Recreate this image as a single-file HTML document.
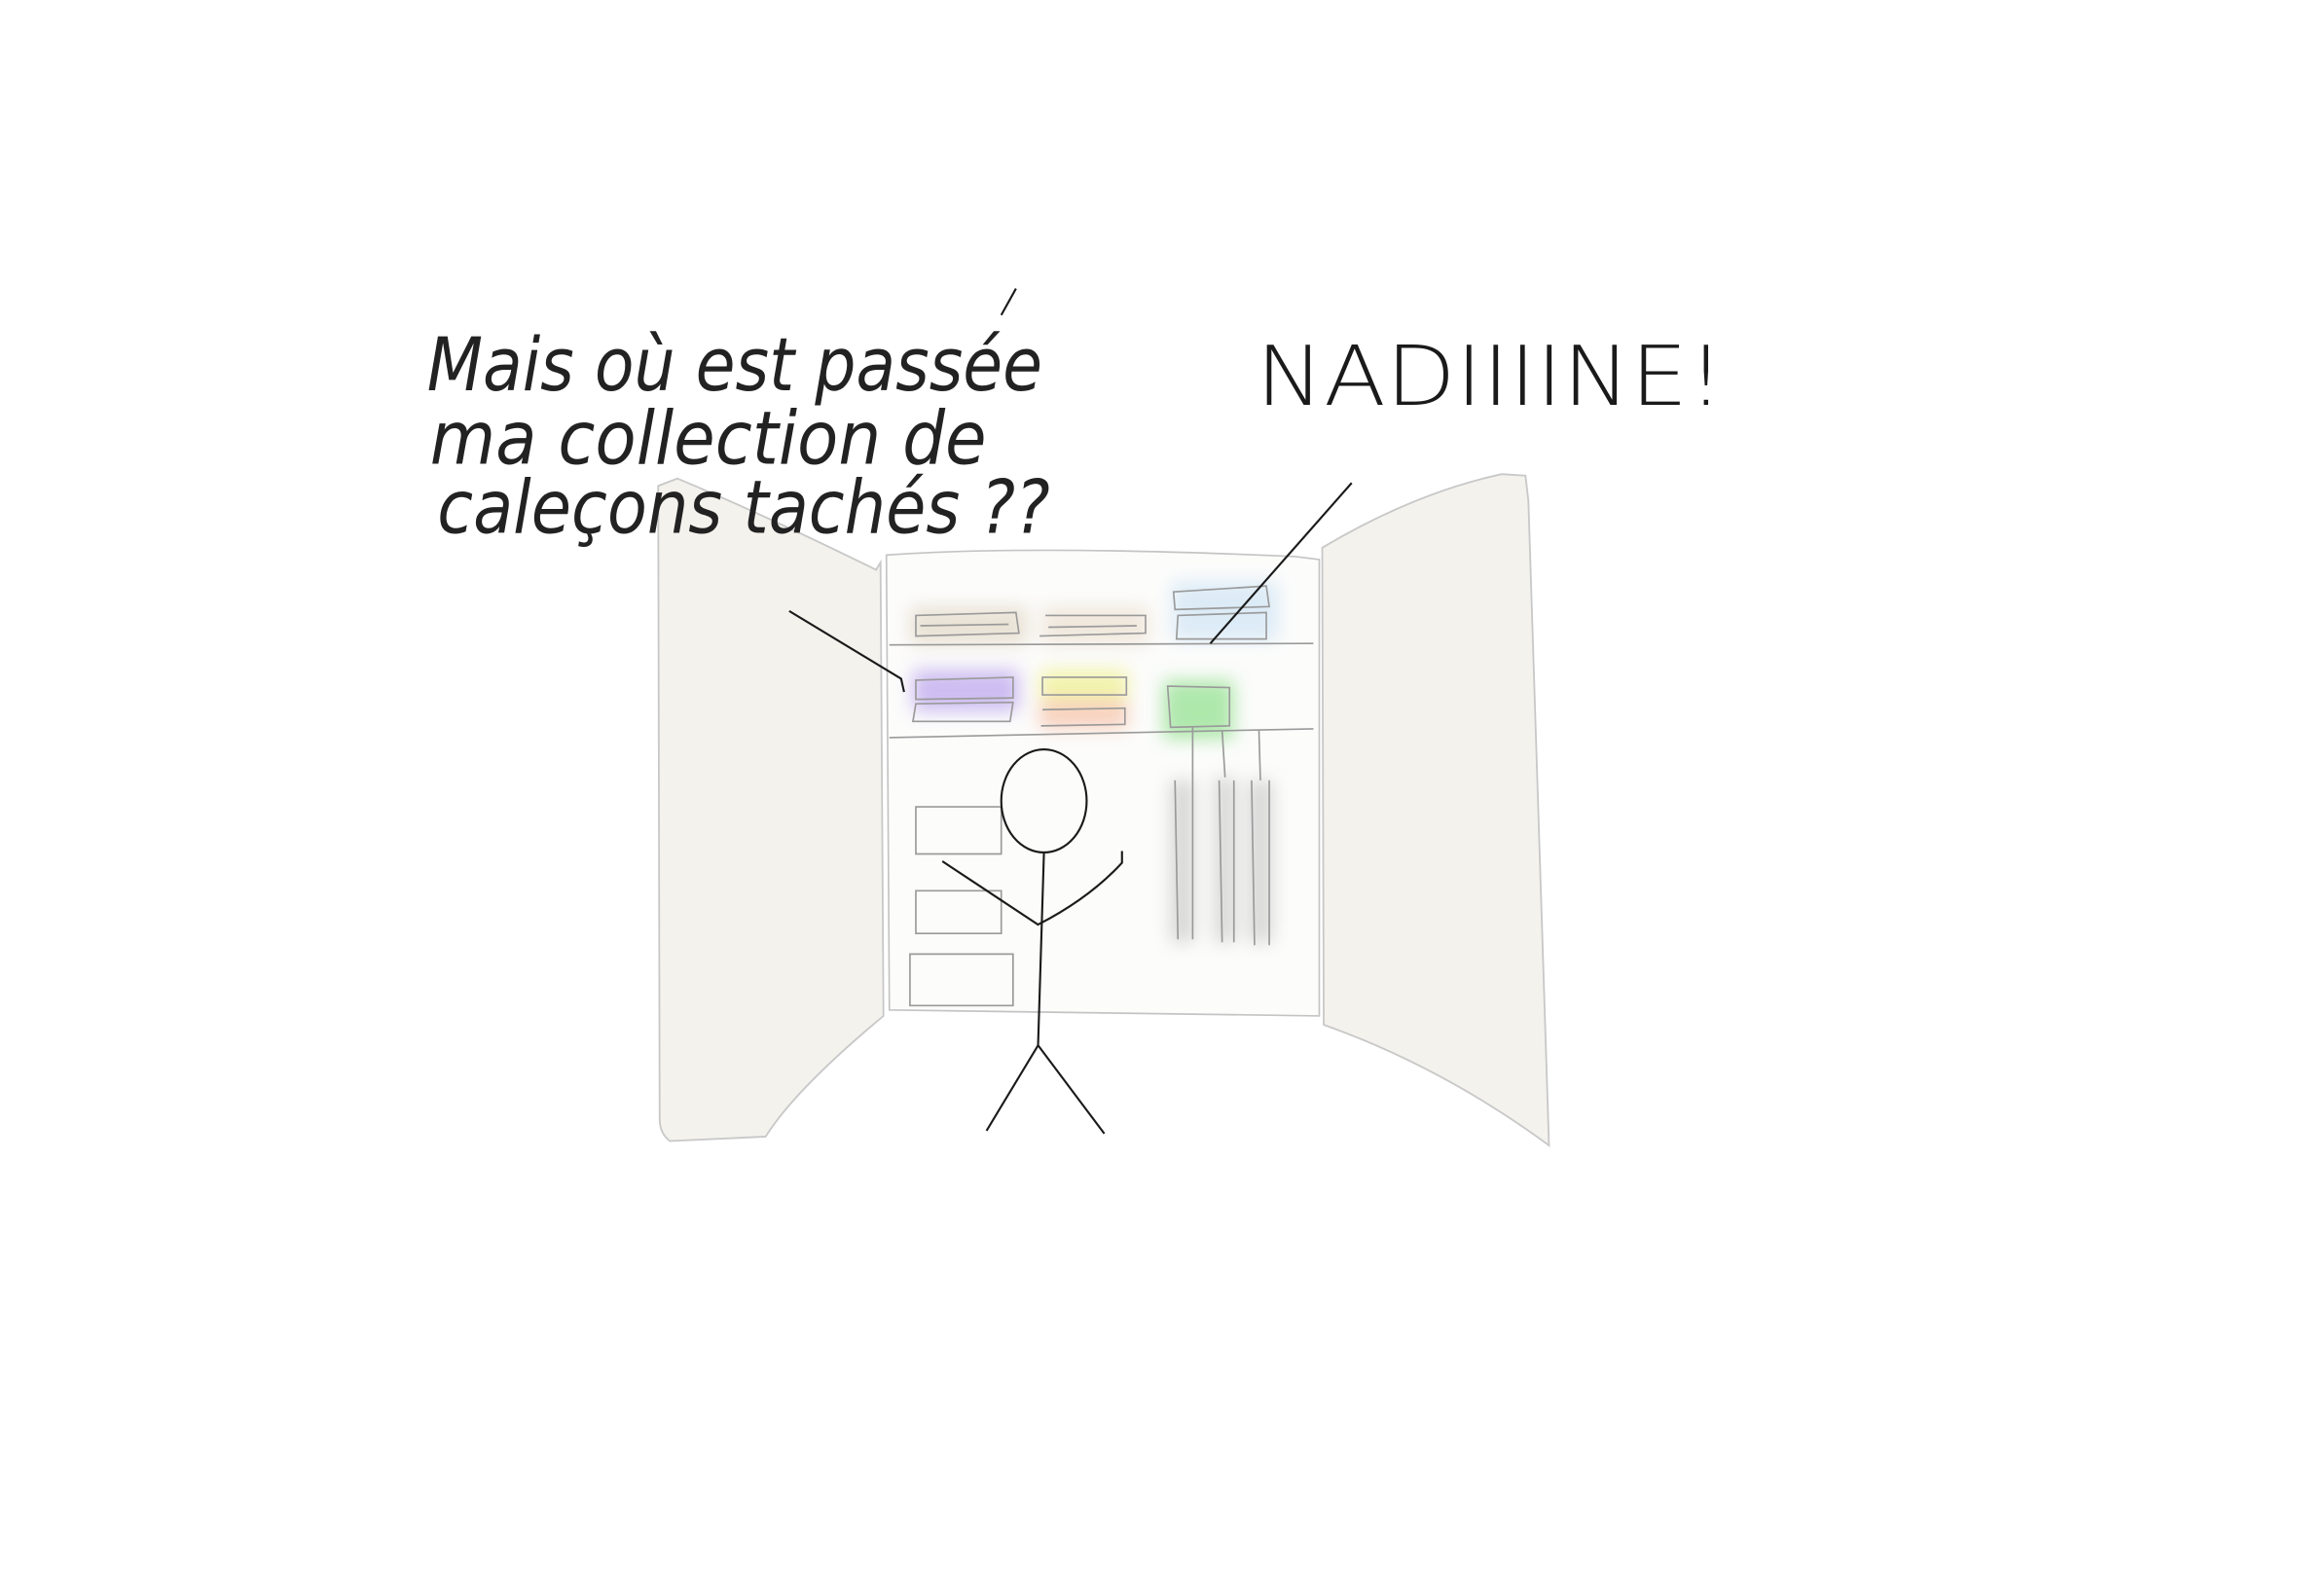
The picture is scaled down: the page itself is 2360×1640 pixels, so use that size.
<!DOCTYPE html>
<html><head><meta charset="utf-8"><style>
html,body{margin:0;padding:0;background:#fff;width:2360px;height:1640px;overflow:hidden}
svg{display:block}
</style></head><body>
<svg width="2360" height="1640" viewBox="0 0 1560 1084" xmlns="http://www.w3.org/2000/svg">
<defs>
<filter id="b" x="-50%" y="-50%" width="200%" height="200%"><feGaussianBlur stdDeviation="6"/></filter>
</defs>
<g fill="none" stroke="#c8c8c8" stroke-width="1.2">
<path d="M447 330 L460 325 Q520 350 595 387 L598 382 L600 690 Q540 740 520 772 L455 775 Q448 770 448 760 Z" fill="#f4f2ed"/>
<path d="M898 372 Q960 335 1020 322 L1036 323 L1038 340 L1052 778 Q980 725 899 696 Z" fill="#f4f2ed"/>
</g>
<path d="M602 377 Q700 370 880 378 L896 380 L896 690 L604 686 Z" fill="#fcfcfb" stroke="#c4c4c4" stroke-width="1.1"/>
<g filter="url(#b)" opacity="0.7">
<rect x="618" y="412" width="80" height="26" fill="#e2d8c6"/>
<rect x="708" y="412" width="72" height="26" fill="#ebe0d0"/>
<rect x="796" y="395" width="72" height="40" fill="#cfe4f5"/>
<rect x="620" y="455" width="72" height="28" fill="#b9a2ee"/>
<rect x="706" y="455" width="60" height="20" fill="#eef08a"/>
<rect x="706" y="475" width="60" height="20" fill="#f6c0a6"/>
<rect x="790" y="462" width="48" height="40" fill="#8ee08a"/>
</g>
<g filter="url(#b)" opacity="0.55">
<rect x="795" y="530" width="16" height="110" fill="#b8b8b8"/>
<rect x="825" y="528" width="14" height="112" fill="#b8b8b8"/>
<rect x="848" y="530" width="16" height="110" fill="#b8b8b8"/>
</g>
<g fill="none" stroke="#9a9a9a" stroke-width="1.1">
<path d="M604 438 L892 437"/><path d="M604 501 L892 495"/>
<path d="M622 418 L690 416 L692 430 L622 432 Z M625 425 L685 424"/>
<path d="M710 418 L778 418 L778 430 L706 432 M712 426 L772 425"/>
<path d="M797 402 L860 398 L862 412 L798 414 Z M800 418 L860 416 L860 434 L799 434 Z"/>
<path d="M622 462 L688 460 L688 474 L622 475 Z M622 478 L688 477 L686 490 L620 490 Z"/>
<path d="M708 460 L765 460 L765 472 L708 472 Z M708 482 L764 481 L764 492 L707 493"/>
<path d="M793 466 L835 467 L835 493 L795 494 Z"/>
<path d="M622 548 L680 548 L680 580 L622 580 Z M622 605 L680 605 L680 634 L622 634 Z M618 648 L688 648 L688 683 L618 683 Z"/>
<path d="M810 494 L810 530 M830 496 L832 528 M855 496 L856 530"/>
<path d="M798 530 L800 638 M810 530 L810 638 M828 530 L830 640 M838 530 L838 640 M850 530 L852 642 M862 530 L862 642"/>
</g>
<g fill="none" stroke="#1a1a1a" stroke-width="1.4">
<ellipse cx="709" cy="544" rx="29" ry="35"/>
<path d="M709 579 L705 710 L670 768 M705 710 L750 770"/>
<path d="M640 585 L705 628 Q740 610 762 586 L762 578"/>
<path d="M536 415 L612 461 L614 470"/>
<path d="M918 328 L822 437"/>
<path d="M690 196 L680 214"/>
</g>
<g font-family="'DejaVu Sans ExtraLight','DejaVu Sans Condensed','DejaVu Sans',sans-serif" font-weight="200" fill="#222" font-style="italic">
<text x="290" y="265" font-size="50" textLength="418" lengthAdjust="spacingAndGlyphs">Mais où est passée</text>
<text x="292" y="315" font-size="50" textLength="378" lengthAdjust="spacingAndGlyphs">ma collection de</text>
<text x="297" y="362" font-size="50" textLength="416" lengthAdjust="spacingAndGlyphs">caleçons tachés ??</text>
</g>
<text x="853" y="275" font-family="'DejaVu Sans ExtraLight','DejaVu Sans',sans-serif" font-weight="200" font-size="56" fill="#1a1a1a" textLength="318" lengthAdjust="spacingAndGlyphs">NADIIIINE!</text>
</svg>
</body></html>
